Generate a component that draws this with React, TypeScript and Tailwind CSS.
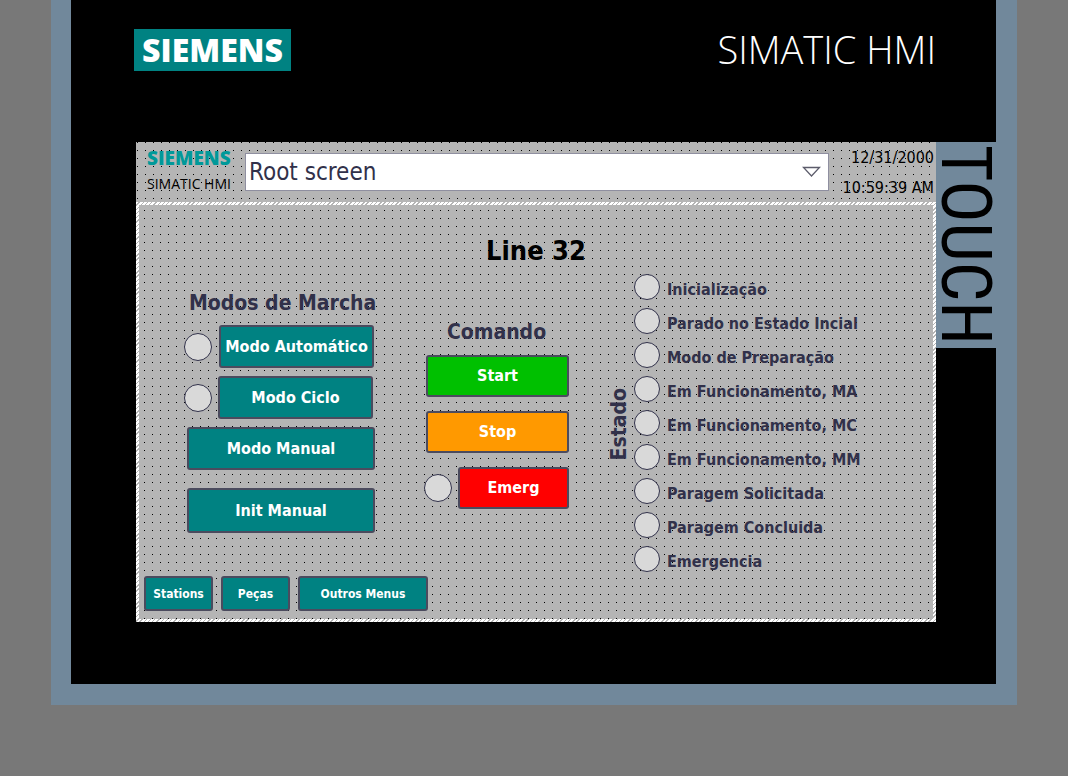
import clsx from 'clsx';

interface PanelButtonProps {
  label: string;
  className?: string;
}

const states = [
  'Inicialização',
  'Parado no Estado Incial',
  'Modo de Preparação',
  'Em Funcionamento, MA',
  'Em Funcionamento, MC',
  'Em Funcionamento, MM',
  'Paragem Solicitada',
  'Paragem Concluida',
  'Emergencia',
];

const dots =
  'bg-[#b5b5b5] bg-[conic-gradient(from_270deg_at_1px_1px,#000_90deg,transparent_0)] bg-[length:8px_8px]';

const PanelButton = ({ label, className }: PanelButtonProps) => (
  <button
    type="button"
    className={clsx(
      'shrink-0 rounded-[3px] border-2 border-[#4b4b5e] font-bold text-white whitespace-nowrap',
      className,
    )}
  >
    {label}
  </button>
);

const Lamp = ({ className }: { className: string }) => (
  <span className={clsx('shrink-0 rounded-full border border-[#31314a] bg-[#d9d9d9]', className)} />
);

const TopBar = () => (
  <header className={clsx('flex h-15 items-start bg-position-[1px_0]', dots)}>
    <div className="ml-[11px] w-[98px] whitespace-nowrap">
      <p className="pt-1.5 font-['Open_Sans',sans-serif] text-[19px] leading-5 font-extrabold text-[#009999]">SIEMENS</p>
      <p className="pt-1.5 font-['Open_Sans',sans-serif] text-[14px] leading-5 text-black">SIMATIC HMI</p>
    </div>
    <div className="relative mt-[11px] h-[38px] flex-1">
      <select
        aria-label="Screen"
        className="h-full w-full appearance-none border border-[#8f8fa0] bg-white pl-[3px] text-[24px] leading-8 text-[#31314a]"
      >
        <option>Root screen</option>
      </select>
      <svg className="pointer-events-none absolute top-[13px] right-2 h-3 w-[19px]" viewBox="0 0 19 12" fill="none" stroke="#5c5c6b" strokeWidth="1.3">
        <path d="M1.5 1.5h16l-8 8.5z" />
      </svg>
    </div>
    <div className="w-[107px] pt-px pr-0.5 text-right text-[16px] leading-[30px] whitespace-nowrap text-black">
      <p>12/31/2000</p>
      <p>10:59:39 AM</p>
    </div>
  </header>
);

const Modes = () => (
  <section className="w-[191px]">
    <h2 className="pt-3 pl-[5px] text-[21px] leading-8 font-bold whitespace-nowrap">Modos de Marcha</h2>
    <div className="mt-1.5 flex flex-col items-start gap-2">
      <div className="flex items-center gap-[7px]">
        <Lamp className="size-7" />
        <PanelButton label="Modo Automático" className="h-[43px] w-[155px] bg-[#008282] text-[16px]" />
      </div>
      <div className="flex items-center gap-1.5">
        <Lamp className="size-7" />
        <PanelButton label="Modo Ciclo" className="h-[43px] w-[155px] bg-[#008282] text-[16px]" />
      </div>
      <PanelButton label="Modo Manual" className="h-[43px] w-[188px] self-end bg-[#008282] text-[16px]" />
      <PanelButton label="Init Manual" className="mt-2.5 h-[45px] w-[188px] self-end bg-[#008282] text-[16px]" />
    </div>
  </section>
);

const Commands = () => (
  <section className="ml-[49px] w-[145px]">
    <h2 className="pt-[41px] text-center text-[21px] leading-8 font-bold">Comando</h2>
    <div className="mt-[7px] flex flex-col items-end gap-3.5">
      <PanelButton label="Start" className="h-[42px] w-[143px] bg-[#00c000] text-[16px]" />
      <PanelButton label="Stop" className="h-[42px] w-[143px] bg-[#ff9900] text-[16px]" />
      <div className="flex items-center gap-1.5">
        <Lamp className="size-7" />
        <PanelButton label="Emerg" className="h-[42px] w-[111px] bg-[#ff0000] text-[16px]" />
      </div>
    </div>
  </section>
);

const MachineState = () => (
  <section className="ml-[39px] flex items-center gap-1">
    <h2 className="rotate-180 text-[21px] leading-[22px] font-bold [writing-mode:vertical-rl]">Estado</h2>
    <ul>
      {states.map((state) => (
        <li key={state} className="flex h-[34px] items-start gap-[7px] last:h-7">
          <Lamp className="size-[26px]" />
          <span className="pt-1.5 text-[16px] leading-5 font-bold whitespace-nowrap">{state}</span>
        </li>
      ))}
    </ul>
  </section>
);

export default function App() {
  return (
    <div className="min-h-screen bg-[#787878] px-[51px] pb-[71px] font-['DejaVu_Sans_Condensed','Noto_Sans',sans-serif]">
      <div className="border-t-0 border-r-[21px] border-b-[21px] border-l-[20px] border-[#71889b] bg-black pb-[62px]">
        <div className="flex h-[142px] items-start justify-between pt-[29px] pr-15 pl-[63px] whitespace-nowrap text-white">
          <div className="flex h-[42px] w-[157px] items-center justify-center bg-[#008282] font-['Open_Sans',sans-serif] text-[32px] leading-[42px] font-extrabold">
            SIEMENS
          </div>
          <p className="font-['Open_Sans',sans-serif] text-[38px] leading-10 font-light">SIMATIC HMI</p>
        </div>
        <div className="flex items-start pl-[65px]">
          <div className="min-w-0 flex-1">
            <TopBar />
            <main className="bg-[repeating-linear-gradient(135deg,#fff_0_2px,#b5b5b5_2px_3px)] p-[3px]">
              <div className={clsx('flex min-h-[414px] flex-col bg-position-[5px_5px] pb-2 text-[#31314a]', dots)}>
                <h1 className="pt-7 text-center text-[27px] leading-9 font-bold text-black">Line 32</h1>
                <div className="flex items-start pl-[45px]">
                  <div className="flex pt-1.5">
                    <Modes />
                    <Commands />
                  </div>
                  <div className="pt-[5px]">
                    <MachineState />
                  </div>
                </div>
                <nav className="mt-auto flex gap-2 pl-[5px]">
                  <PanelButton label="Stations" className="h-[35px] w-[69px] bg-[#008282] text-[12px]" />
                  <PanelButton label="Peças" className="h-[35px] w-[69px] bg-[#008282] text-[12px]" />
                  <PanelButton label="Outros Menus" className="h-[35px] w-[130px] bg-[#008282] text-[12px]" />
                </nav>
              </div>
            </main>
          </div>
          <div className="flex h-[206px] w-15 items-center justify-center bg-[#71889b] font-['Liberation_Sans_Narrow','Roboto_Condensed',sans-serif] text-[70px] leading-[62px] text-black [writing-mode:vertical-rl]">
            TOUCH
          </div>
        </div>
      </div>
    </div>
  );
}
